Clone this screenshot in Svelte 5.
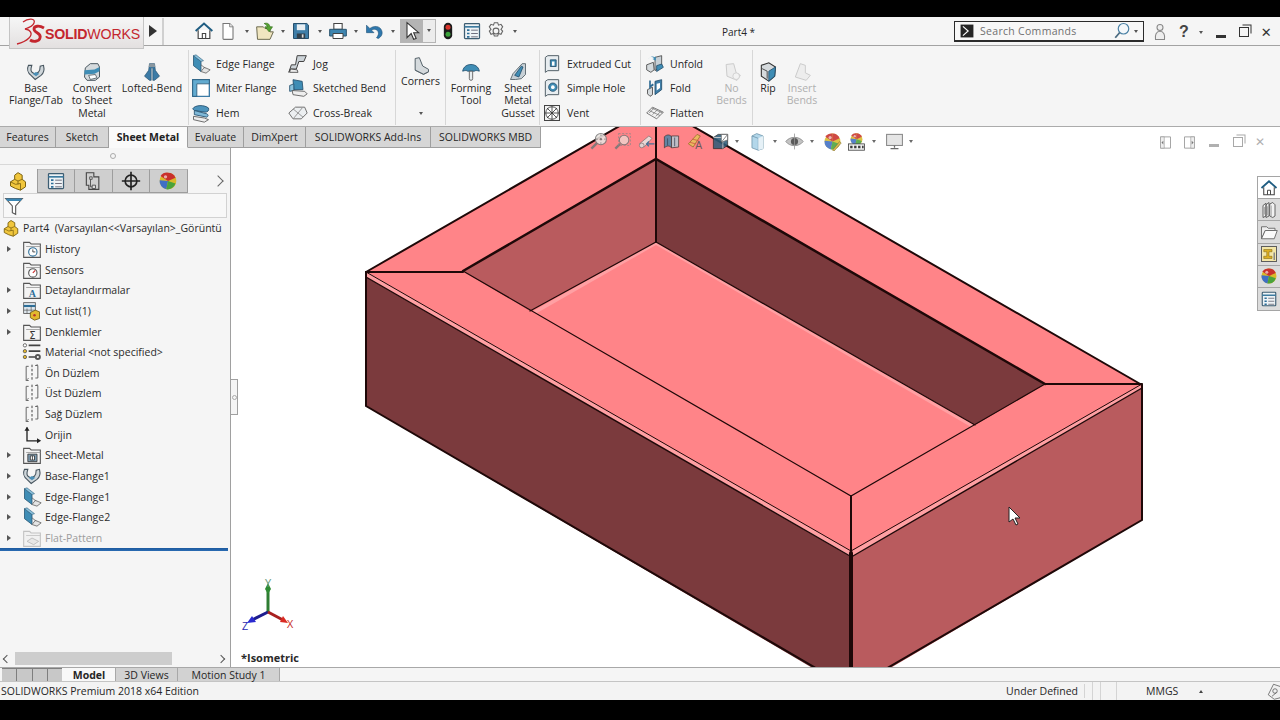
<script>
	const folder = (inner, fill = '#f4f4f4') =>
		`<path d="M2 4h7l2 2h11v16H2z" fill="${fill}" stroke="#555" stroke-width="1.3"/><path d="M5 9h17" stroke="#999" stroke-width="1"/>${inner}`;

	const edge = `<path d="M3 2 12 9v12L3 14z" fill="#3f8db5" stroke="#2b5a78"/><path d="M3 2 6 1l9 7-3 1z" fill="#8cc3dd" stroke="#2b5a78" stroke-width=".7"/><path d="M12 21l4-5 7 3-5 4z" fill="#e4e4e4" stroke="#666"/><path d="M12 13l5 4" stroke="#666"/>`;
	const base = `<path d="M3 4c-2 4-1 9 3 12l5 5 7-5c4-3 4-8 3-12l-4 1c0 3 0 5-2 7l-4 3-4-3C5 10 6 7 7 4z" fill="#cfd6da" stroke="#46545e" stroke-width="1.3"/><path d="M8 14l4 3 4-3-4-2z" fill="#4c8fb5"/>`;
	const plane = `<path d="M8 4H5v17h3M16 3h3v15h-3" fill="none" stroke="#666" stroke-width="1.2"/><path d="M12 2v20" stroke="#444" stroke-dasharray="3 2" stroke-width="1.2"/><path d="M5 21l3-3M16 3l3-1" stroke="#666"/>`;
	const globe = `<circle cx="12" cy="12" r="10" fill="#d9b92a"/><path d="M12 12 3 6a10 10 0 0 1 9-4z" fill="#c9302c"/><path d="M12 12V2a10 10 0 0 1 9 6z" fill="#c9302c"/><path d="M12 12 2 11a10 10 0 0 0 8 11z" fill="#3f6fc4"/><path d="M12 12l-2 10a10 10 0 0 0 11-7z" fill="#49a33c"/><circle cx="9" cy="7" r="2" fill="#fff" opacity=".6"/>`;
	const list = `<rect x="3" y="3" width="18" height="18" rx="1" fill="#eef3f6" stroke="#3d5d72" stroke-width="1.5"/><path d="M3 7h18" stroke="#3d7ba0" stroke-width="2"/><path d="M6 11h3M6 15h3M6 19h3" stroke="#2d6f99" stroke-width="2"/><path d="M11 11h8M11 15h8M11 19h8" stroke="#556"/>`;
	const part = `<path d="M3 13l5-3V5l4-3 5 3v5l4 3v6l-6 4-6-2-6-3z" fill="#f1c63c" stroke="#7c6210" stroke-width="1.2"/><path d="M8 10l4 2 5-2M12 12v4M3 13l6 3 6-1v8" fill="none" stroke="#7c6210" stroke-width="1"/>`;

	const icons = {
		home: `<path d="M2 12 12 3l10 9" fill="none" stroke="#1f5d82" stroke-width="2.4"/><path d="M5 11v10h14V11" fill="#fff" stroke="#444" stroke-width="1.4"/><path d="M10 21v-6h4v6" fill="none" stroke="#444" stroke-width="1.3"/>`,
		doc: `<path d="M6 3h8l4 4v14a1 1 0 0 1-1 1H7a1 1 0 0 1-1-1z" fill="#fff" stroke="#777" stroke-width="1.3"/><path d="M14 3v4h4" fill="#eee" stroke="#777"/>`,
		open: `<path d="M2 7h8l2 2h6v4h4l-4 9H3z" fill="#f0e6c0" stroke="#6d6a50" stroke-width="1.2"/><path d="M11 3c4-1 6 0 7 4h3l-4 6-5-6h3c-1-2-2-3-4-4z" fill="#56a332" stroke="#2f6d16" stroke-width=".8"/>`,
		save: `<path d="M3 3h16l2 2v16H3z" fill="#3f7ea8" stroke="#264f6c" stroke-width="1.2"/><path d="M7 4h10v7H7z" fill="#e8eef2"/><path d="M7 15h10v6H7z" fill="#33404a"/><path d="M13 16h2v4h-2z" fill="#ddd"/>`,
		print: `<path d="M7 3h10v7H7z" fill="#fff" stroke="#444" stroke-width="1.3"/><path d="M2 10h20v8H2z" fill="#3f86b0" stroke="#2b556f" stroke-width="1.2"/><path d="M6 15h12v6H6z" fill="#fff" stroke="#444" stroke-width="1.2"/>`,
		undo: `<path d="M3 5v9h9l-3-3c3-2 7-1 8 2 1 2 0 5-2 7l2 1c4-2 6-6 4-10-2-5-9-6-14-2z" fill="#2f78ad" stroke="#1c4f75" stroke-width=".7"/>`,
		arrow: `<path d="M6 2v18l5-5 3 7 3-1-3-7h6z" fill="#fff" stroke="#333" stroke-width="1.3"/>`,
		traffic: `<rect x="7" y="2" width="10" height="20" rx="5" fill="#1b1b1b"/><circle cx="12" cy="7.5" r="3" fill="#d9342b"/><circle cx="12" cy="16" r="3" fill="#3aa23a"/>`,
		list,
		gear: `<circle cx="12" cy="12" r="3.5" fill="none" stroke="#666" stroke-width="1.3"/><path d="M10 2h4l1 3 3-1 2 3-2 3 2 2-2 4-3-1-1 3h-4l-1-3-3 1-2-4 2-2-2-3 2-3 3 1z" fill="none" stroke="#666" stroke-width="1.3"/>`,
		user: `<circle cx="12" cy="6" r="4" fill="#eee" stroke="#888" stroke-width="1.4"/><path d="M6 22c-1-6 1-11 6-11s7 5 6 11z" fill="#eee" stroke="#888" stroke-width="1.4"/>`,
		lens: `<circle cx="14" cy="9" r="7" fill="#f4f8fb" stroke="#4b82a6" stroke-width="1.6"/><path d="M9 14l-6 7" stroke="#4b6b80" stroke-width="2.4"/>`,
		prompt: `<rect x="1" y="1" width="22" height="22" fill="#262626"/><path d="M5 4l9 8-9 8" fill="none" stroke="#fff" stroke-width="2"/>`,
		base,
		convert: `<path d="M4 7l6-5h9l2 4v12l-5 4H6l-3-4z" fill="#d5dadd" stroke="#4c5a62" stroke-width="1.2"/><path d="M3 10l12-1 6-3v5l-6 3-12 1z" fill="#3f8db5"/><path d="M8 16l8-1 2 4-8 2z" fill="#fff" stroke="#4c5a62"/>`,
		lofted: `<path d="M9 2h6l1 8 5 7-6 5h-2V7h-2v15H9l-6-5 5-7z" fill="#3c7ba6" stroke="#234e6c" stroke-width=".8"/><path d="M9 2h6l1 4H8z" fill="#8a97a0"/>`,
		edge,
		miter: `<path d="M2 2h20v20H2z" fill="#fff" stroke="#3c7ba6" stroke-width="1.6"/><path d="M2 2h20v5H7v15H2z" fill="#62abd0" stroke="#2b5a78"/>`,
		hem: `<path d="M2 7c3-5 14-5 19-1 1 3-1 5-4 5L4 9z" fill="#4c93bc" stroke="#234e6c"/><path d="M4 9l15 4c2 1 2 3 0 4L4 14z" fill="#80b9d8" stroke="#234e6c"/><path d="M3 16l13 2 5 2-5 3-13-3z" fill="#eee" stroke="#555"/>`,
		jog: `<path d="M11 2h11l-3 7h-6l-3 9H3l-2 4 3-9h5z" fill="#ccd3d8" stroke="#444" stroke-width="1.2"/><path d="M3 18l8 1 1 3H2z" fill="#eee" stroke="#444"/>`,
		sketched: `<path d="M6 2l11 2 1 10H7z" fill="#3f8db5" stroke="#234e6c"/><path d="M2 9l5-2v8l-5 1z" fill="#8cc3dd" stroke="#234e6c"/><path d="M5 15l15 1 3 3-4 3-13-2z" fill="#eee" stroke="#555"/>`,
		cross: `<path d="M1 12 9 5h11l3 7-7 7H6z" fill="#eceff1" stroke="#666" stroke-width="1.1"/><path d="M6 7l12 10M17 6 7 18" stroke="#888"/>`,
		corners: `<path d="M5 3l5-1 4 10 7 4v3l-6 3-10-5z" fill="#d5dadd" stroke="#55626a" stroke-width="1.2"/><path d="M5 17l10 5 6-3" fill="none" stroke="#55626a"/>`,
		forming: `<path d="M2 11C3 5 8 3 12 3s9 2 10 8c-3-1-5-1-6 0h-8c-1-1-3-1-6 0z" fill="#3f8db5" stroke="#234e6c"/><path d="M10 11h4v9a2 2 0 0 1-4 0z" fill="#e6ecef" stroke="#555"/>`,
		gusset: `<path d="M3 21l3-7L17 2h4v13l-5 5-7 1z" fill="#c7d0d6" stroke="#4c5a62"/><path d="M8 16l8-11 2 1-5 12z" fill="#3f8db5" stroke="#234e6c"/>`,
		extcut: `<path d="M4 4l3-2h13v18H7l-3 2z" fill="#e8edf0" stroke="#55626a" stroke-width="1.2"/><path d="M10 7h7v8h-7z" fill="#3f8db5" stroke="#234e6c"/><path d="M12 9h3v5h-3z" fill="#fff"/>`,
		hole: `<path d="M4 4l3-2h13v18H7l-3 2z" fill="#e8edf0" stroke="#55626a" stroke-width="1.2"/><circle cx="13" cy="11" r="5" fill="#3f8db5" stroke="#234e6c"/><circle cx="13" cy="11" r="2.2" fill="#fff"/>`,
		vent: `<rect x="3" y="3" width="18" height="18" fill="#f2f2f2" stroke="#444" stroke-width="1.2"/><circle cx="12" cy="12" r="7.5" fill="#fff" stroke="#333"/><path d="M12 4v16M4 12h16M6 6l12 12M18 6 6 18" stroke="#333"/>`,
		unfold: `<path d="M2 13l8-3 1 9-4 3-5-3z" fill="#d5dadd" stroke="#444"/><path d="M12 4l8-2v12l-8 6z" fill="#c7d0d6" stroke="#444"/><path d="M4 6c2-3 5-3 7-1l-2 1 4 2V3l-1 1c-3-2-6-1-8 2z" fill="#3f8db5"/><path d="M14 14l6-2 2 4-8 5z" fill="#3f8db5" stroke="#234e6c"/>`,
		fold: `<path d="M3 14l6-3v9l-3 2-3-3z" fill="#d5dadd" stroke="#444"/><path d="M12 4l8-2v12l-8 6z" fill="#3f7ea8" stroke="#234e6c"/><path d="M14 7l4-1v6l-4 3z" fill="#fff"/><path d="M6 3v8l3-3 1 1" fill="none" stroke="#2f6b93" stroke-width="2"/>`,
		flatten: `<path d="M2 12 9 5l13 6-8 8z" fill="#f2f2f2" stroke="#666"/><path d="M5 9l13 6M8 6l13 6M11 6l-6 6M15 8l-6 6M19 10l-6 6" stroke="#777" stroke-width=".9"/>`,
		nobends: `<g opacity=".55"><path d="M5 3l9-1 3 11 5 3-4 6-12-5z" fill="#e8e8e8" stroke="#aaa" stroke-width="1.2"/><circle cx="17" cy="17" r="4" fill="#f0f0f0" stroke="#aaa"/></g>`,
		rip: `<path d="M4 4l9-3 8 5-1 11-7 6-9-6z" fill="#d5dadd" stroke="#333" stroke-width="1.3"/><path d="M13 11l8-5-1 11-7 6z" fill="#3f8db5" stroke="#234e6c"/><path d="M5 8l6 3v9" fill="none" stroke="#333"/>`,
		insert: `<g opacity=".55"><path d="M10 2l6 2v9l6 3-5 6-13-4z" fill="#e8e8e8" stroke="#aaa" stroke-width="1.2"/></g>`,
		history: folder(`<circle cx="13" cy="15.5" r="5" fill="#fff" stroke="#2d6f99" stroke-width="1.3"/><path d="M13 12.5v3h3" stroke="#333" fill="none"/>`),
		sensors: folder(`<circle cx="13" cy="15.5" r="5" fill="#fff" stroke="#555" stroke-width="1.3"/><path d="M13 15.5l3-3" stroke="#c33" stroke-width="1.5"/>`),
		annot: folder(`<text x="12.5" y="20.5" font-family="Liberation Serif, serif" font-size="12" font-weight="700" text-anchor="middle" fill="#2d6f99">A</text>`),
		cutlist: `<rect x="2" y="2" width="14" height="13" fill="#dfe8ee" stroke="#555"/><path d="M2 6h14" stroke="#2d6f99" stroke-width="2.5"/><path d="M6 9v6M11 6v9M2 11h14" stroke="#555" stroke-width=".8"/><path d="M10 14l6-3 5 2v8l-6 2-5-3z" fill="#e2b92e" stroke="#6b5810"/><circle cx="15" cy="17" r="1.5" fill="#b6352a"/>`,
		sigma: folder(`<text x="12.5" y="20.5" font-family="DejaVu Sans, sans-serif" font-size="12" text-anchor="middle" fill="#333">Σ</text>`),
		material: `<circle cx="3.5" cy="4" r="2" fill="#fff" stroke="#555"/><circle cx="3.5" cy="11" r="2" fill="#e5b82a" stroke="#555"/><circle cx="3.5" cy="18" r="2" fill="#e5b82a" stroke="#555"/><path d="M8 4h14M8 11h14M8 18h8" stroke="#444" stroke-width="2"/><circle cx="19" cy="18" r="3.6" fill="#555"/><circle cx="19" cy="18" r="1.3" fill="#fff"/>`,
		plane,
		origin: `<path d="M6 3v16h14" fill="none" stroke="#222" stroke-width="1.6"/><path d="M3 7l3-5 3 5zM18 16l5 3-5 3z" fill="#222"/>`,
		smfolder: folder(`<path d="M7 11h11v9H7z" fill="#7f9fb5" stroke="#333"/><path d="M10 13h5v5h-5z" fill="#fff" stroke="#333"/><path d="M12.5 13v5" stroke="#333"/>`),
		flat: `<g opacity=".55">${folder(`<path d="M6 16l6-4 8 4-6 4z" fill="#ddd" stroke="#888"/>`, '#efefef').replaceAll('#555', '#999')}</g>`,
		part,
		treeview: list,
		config: `<path d="M4 2h9v5h6v15H7v-5H4z" fill="none" stroke="#444" stroke-width="1.3"/><path d="M8 7h3v3H8zM11 17h4v4h-4z" fill="#ddd" stroke="#444"/><path d="M9 10v9h2" fill="none" stroke="#444"/>`,
		crosshair: `<circle cx="12" cy="12" r="7" fill="none" stroke="#222" stroke-width="2"/><path d="M12 1v22M1 12h22" stroke="#222" stroke-width="2"/>`,
		globe,
		funnel: `<path d="M2 3h20l-8 9v10l-4-2v-8z" fill="#fff" stroke="#555" stroke-width="1.3"/><path d="M2 3h20l-2 3H4z" fill="#3a86b3"/>`,
		zoomfit: `<circle cx="15" cy="9" r="7" fill="#e9e4e0" stroke="#777" stroke-width="1.3"/><path d="M10 14l-7 7" stroke="#777" stroke-width="3"/><circle cx="15" cy="9" r="1.5" fill="#777"/><path d="M11 9h-2M21 9h-2M15 5V3M15 15v-2" stroke="#777"/>`,
		zoomarea: `<circle cx="14" cy="10" r="6" fill="#f2cfc9" stroke="#777" stroke-width="1.3"/><path d="M9 15l-6 6" stroke="#777" stroke-width="3"/><rect x="7" y="2" width="15" height="15" fill="none" stroke="#888" stroke-dasharray="2.5 2"/>`,
		prev: `<path d="M3 15 15 5l4 3-10 11z" fill="#e8e4e0" stroke="#777"/><circle cx="6" cy="17" r="3" fill="#ddd" stroke="#777"/><path d="M22 15H12m3-3-3 3 3 3" stroke="#2d6f99" stroke-width="1.6" fill="none"/>`,
		section: `<path d="M3 6c3-3 7-3 9 0v14c-2-3-6-3-9 0z" fill="#4e86a6" stroke="#333"/><path d="M12 5h9v14l-9 1z" fill="#b7c6cf" stroke="#333"/><path d="M7 8v9M16 7v11" stroke="#23435a"/>`,
		dyn: `<path d="M3 15 14 3l4 2-9 14z" fill="#e8c05a" stroke="#8a6d1f"/><path d="M8 9l8 2M5 13l7 2" stroke="#c9503c"/><text x="16" y="22" font-family="Liberation Sans, sans-serif" font-size="13" text-anchor="middle" fill="#555">A</text>`,
		orient: `<path d="M3 7l6-4h12v14l-6 4H3z" fill="#2f5d7a" stroke="#222"/><path d="M3 7h12v14" fill="none" stroke="#ddd"/><path d="M15 7l6-4" stroke="#ddd"/><path d="M13 3h8v7l-8 3z" fill="#fff" stroke="#555"/><path d="M13 13l8-10" stroke="#555"/>`,
		cube: `<path d="M5 5l6-3 8 3v16l-6 2-8-3z" fill="#a9d2e8" stroke="#5a87a0"/><path d="M5 5l8 3v15" fill="none" stroke="#5a87a0"/><path d="M13 8l6-3v16l-6 2z" fill="#e3f0f7"/>`,
		eye: `<path d="M1 12c5-7 17-7 22 0-5 7-17 7-22 0z" fill="#bbb" stroke="#777"/><circle cx="12" cy="12" r="4.5" fill="#444"/><path d="M12 2v20" stroke="#888"/>`,
		appear: `${globe}<path d="M12 23l9-11 2 2-9 10z" fill="#d8b43a" stroke="#6b5810" stroke-width=".7"/>`,
		scene: `<g transform="translate(3 0) scale(.75)">${globe}</g><rect x="2" y="15" width="20" height="8" fill="#eee" stroke="#222"/><path d="M4 19h3M9 19h3M14 19h3M19 19h2" stroke="#222" stroke-width="3"/>`,
		monitor: `<rect x="2" y="3" width="20" height="14" fill="#e2e2e2" stroke="#777" stroke-width="1.3"/><path d="M12 17v3M7 21h10" stroke="#555" stroke-width="1.6"/>`,
		pane1: `<path d="M4 3h16v18H4z" fill="#fff" stroke="#999" stroke-width="1.4"/><path d="M4 3h6v18H4z" fill="#eee" stroke="#999"/><path d="M8.5 9l-3 3 3 3z" fill="#777"/>`,
		pane2: `<path d="M4 3h16v18H4z" fill="#fff" stroke="#999" stroke-width="1.4"/><path d="M14 3h6v18h-6z" fill="#eee" stroke="#999"/><path d="M15.5 9l3 3-3 3z" fill="#777"/>`,
		books: `<path d="M4 6l4-3v17l-4 2zM8 5l4-3v18l-4 2zM13 4l4-2 3 3v15l-3 2-4-2z" fill="#f2f2f2" stroke="#555" stroke-width="1.2"/><path d="M15 6v14M6 8v10M10 7v12" stroke="#999"/>`,
		openfolder: `<path d="M2 21V5h7l2 2h9v3H7z" fill="#eee" stroke="#666" stroke-width="1.2"/><path d="M2 21l5-11h16l-4 11z" fill="#fafafa" stroke="#666" stroke-width="1.2"/>`,
		library: `<rect x="2" y="2" width="20" height="20" fill="#f3e6a8" stroke="#5a5a5a" stroke-width="1.3"/><path d="M5 6h11v3H12v6h4v3H5v-3h4V9H5z" fill="#dcaf22" stroke="#7c6210" stroke-width=".7"/><path d="M18 10h2v10h-2z" fill="#888"/>`,
		sheet: `<path d="M3 17 10 3l9 3 3 5-3 10-8 2z" fill="#f0f0f0" stroke="#555"/><circle cx="12" cy="12" r="3" fill="none" stroke="#555"/><path d="M8 19l6-5" stroke="#555"/>`
	};

	// [icon, label, disabled, width]
	const groups = [
		{ w: 189, pad: 3, large: [['base', 'Base<br>Flange/Tab', false, 66], ['convert', 'Convert<br>to Sheet<br>Metal', false, 46], ['lofted', 'Lofted-Bend', false, 74]] },
		{ w: 207, cols: [
			{ w: 97, items: [['edge', 'Edge Flange'], ['miter', 'Miter Flange'], ['hem', 'Hem']] },
			{ w: 110, items: [['jog', 'Jog'], ['sketched', 'Sketched Bend'], ['cross', 'Cross-Break']] }
		] },
		{ w: 50, corners: true },
		{ w: 94, large: [['forming', 'Forming<br>Tool', false, 50], ['gusset', 'Sheet<br>Metal<br>Gusset', false, 44]] },
		{ w: 101, cols: [{ w: 100, items: [['extcut', 'Extruded Cut'], ['hole', 'Simple Hole'], ['vent', 'Vent']] }] },
		{ w: 112, pad: 2, cols: [{ w: 68, items: [['unfold', 'Unfold'], ['fold', 'Fold'], ['flatten', 'Flatten']] }], large: [['nobends', 'No<br>Bends', true, 41]] },
		{ w: 80, last: true, large: [['rip', 'Rip', false, 30], ['insert', 'Insert<br>Bends', true, 38]] }
	];

	const tabs = [
		['Features', 56], ['Sketch', 53], ['Sheet Metal', 79, true], ['Evaluate', 56],
		['DimXpert', 62], ['SOLIDWORKS Add-Ins', 125], ['SOLIDWORKS MBD', 110]
	];

	const tree = [
		['history', 'History', true], ['sensors', 'Sensors', false], ['annot', 'Detaylandırmalar', true],
		['cutlist', 'Cut list(1)', true], ['sigma', 'Denklemler', true], ['material', 'Material <not specified>', false],
		['plane', 'Ön Düzlem', false], ['plane', 'Üst Düzlem', false], ['plane', 'Sağ Düzlem', false],
		['origin', 'Orijin', false], ['smfolder', 'Sheet-Metal', true], ['base', 'Base-Flange1', true],
		['edge', 'Edge-Flange1', true], ['edge', 'Edge-Flange2', true], ['flat', 'Flat-Pattern', true, true]
	];

	const hud = [
		[['zoomfit', false], ['zoomarea', false], ['prev', false], ['section', false], ['dyn', false], ['orient', true]],
		[['cube', true]],
		[['eye', true]],
		[['appear', false], ['scene', true]],
		[['monitor', true]]
	];
</script>

{#snippet ic(name, cls = '')}
	<svg class="ic {cls}" viewBox="0 0 24 24" aria-hidden="true">{@html icons[name]}</svg>
{/snippet}

{#snippet big(item)}
	<div class="big" class:off={item[2]} style="width: {item[3]}px">{@render ic(item[0])}<span>{@html item[1]}</span></div>
{/snippet}

<div class="app">
	<div class="letterbox top"></div>

	<header class="titlebar">
		<div class="logo">
			<svg class="ds" viewBox="0 0 30 28" aria-hidden="true">
				<path d="M8 5C13 1 21 1 19 6 18 9 13 11 10 12 16 13 18 17 14 21 11 24 6 26 2 27" fill="none" stroke="#c4262e" stroke-width="1.3" />
				<path d="M29 11C24 8 19 9 19 12 19 16 27 16 25 21 24 25 18 25 15 23" fill="none" stroke="#c4262e" stroke-width="2.8" />
			</svg>
			<span class="brand"><b>SOLID</b>WORKS</span>
		</div>
		<div class="expand"></div>
		<div class="quick">
			<span class="qa">{@render ic('home')}</span>
			{#each ['doc', 'open', 'save', 'print', 'undo'] as name}
				<span class="qa">{@render ic(name)}</span><span class="dd"></span>
			{/each}
			<span class="select"><span class="pressed">{@render ic('arrow')}</span><span class="dd"></span></span>
			<span class="qa">{@render ic('traffic')}</span>
			<span class="qa">{@render ic('list')}</span>
			<span class="qa">{@render ic('gear')}</span><span class="dd"></span>
		</div>
		<div class="doc-title">Part4 *</div>
		<div class="search">
			{@render ic('prompt', 'sm')}
			<span class="search-text">Search Commands</span>
			{@render ic('lens', 'md')}
			<span class="dd"></span>
		</div>
		<div class="winbtns">
			{@render ic('user', 'md')}
			<span class="help">?</span><span class="dd"></span>
			<span class="min"></span>
			<span class="restore"></span>
			<span class="close">✕</span>
		</div>
	</header>

	<section class="ribbon">
		{#each groups as g}
			<div class="group" class:last={g.last} style="width: {g.w}px; padding-left: {g.pad ?? 0}px">
				{#if g.corners}
					<div class="corners">
						{@render ic('corners')}
						<span>Corners</span>
						<span class="dd corners-dd"></span>
					</div>
				{/if}
				{#each g.cols ?? [] as col}
					<div class="col" style="width: {col.w}px">
						{#each col.items as [icon, label]}
							<div class="small">{@render ic(icon)}<span>{label}</span></div>
						{/each}
					</div>
				{/each}
				{#each g.large ?? [] as item}
					{@render big(item)}
				{/each}
			</div>
		{/each}
	</section>

	<main class="main">
		<nav class="cmd-tabs">
			{#each tabs as [label, w, active]}
				<span class="cmd-tab" class:active style="width: {w}px">{label}</span>
			{/each}
		</nav>

		<aside class="panel">
			<div class="grip"><i></i></div>
			<div class="panel-tabs">
				<span class="ptab active">{@render ic('part', 'pt')}</span>
				<span class="ptab">{@render ic('treeview', 'pt')}</span>
				<span class="ptab">{@render ic('config', 'pt')}</span>
				<span class="ptab">{@render ic('crosshair', 'pt')}</span>
				<span class="ptab">{@render ic('globe', 'pt')}</span>
				<span class="chev"></span>
			</div>
			<div class="filter">{@render ic('funnel', 'fn')}</div>
			<div class="tree">
				<div class="node root">{@render ic('part', 'row')}<span>Part4&nbsp; (Varsayılan&lt;&lt;Varsayılan&gt;_Görüntü</span></div>
				{#each tree as [icon, label, arrow, off]}
					<div class="node" class:off>
						<span class="twist" class:arrow></span>
						{@render ic(icon)}
						<span>{label}</span>
					</div>
				{/each}
			</div>
			<div class="rollback"></div>
			<div class="hscroll">
				<span class="sb-arrow left"></span>
				<span class="thumb"></span>
				<span class="sb-arrow right"></span>
			</div>
		</aside>

		<div class="viewport">
			<svg class="model" viewBox="231 127 1049 540" aria-label="Sheet metal part">
				<!-- top rim -->
				<polygon points="366,272 656,105 1142,385 852,553" fill="#ff8488" />
				<!-- cavity -->
				<polygon points="463,271 656,159 656,242 530,311" fill="#b95b5e" />
				<polygon points="656,159 1045,384 975,425 656,242" fill="#7b3a3d" />
				<polygon points="530,311 656,242 975,425 851,496" fill="#ff8488" />
				<!-- outer walls -->
				<polygon points="366,277 850,556 850,690 366,406" fill="#7b3a3d" />
				<polygon points="853,556 1142,388 1142,520 853,690" fill="#b95b5e" />
				<!-- lips -->
				<polygon points="366,272 851,551 851,556 366,277" fill="#ffa0a3" />
				<polygon points="852,551 1142,384 1142,388 853,556" fill="#ffa0a3" />
				<polygon points="533,311 656,242 656,245 537,313" fill="#ffa0a3" />
				<polygon points="656,242 975,425 971,427 656,245" fill="#ffa0a3" />
				<g fill="none" stroke="#1e0808" stroke-linecap="round">
					<path d="M366 272 656 105 1142 385" stroke-width="2" />
					<path d="M366 272V406L850 688M1142 385V520L853 688" stroke-width="2" />
					<path d="M366 272H463M1045 384H1142M656 105V242" stroke-width="2" />
					<path d="M463 271 656 159 1045 384" stroke-width="2.5" />
					<path d="M366 272 851 551 1142 384" stroke-width="1" />
					<path d="M366 277 850 556M853 556 1142 388" stroke-width="1.4" />
					<path d="M463 271 851 496 1045 384M530 311 656 242 975 425" stroke-width="1.2" />
					<path d="M851 496V551" stroke-width="2" />
					<path d="M851 553V667" stroke-width="4" />
				</g>
			</svg>

			<div class="hud">
				{#each hud as set}
					<div class="hud-set">
						{#each set as [name, hasDd]}
							<span class="hud-btn">{@render ic(name, 'hud-ic')}</span>
							{#if hasDd}<span class="dd hud-dd"></span>{/if}
						{/each}
					</div>
				{/each}
			</div>

			<div class="pane-btns">
				<span>{@render ic('pane1', 'pb')}</span>
				<span>{@render ic('pane2', 'pb')}</span>
				<span class="min grey"></span>
				<span class="restore grey"></span>
				<span class="close grey">✕</span>
			</div>

			<div class="taskpane">
				<span class="active">{@render ic('home', 'tp')}</span>
				<span>{@render ic('books', 'tp')}</span>
				<span>{@render ic('openfolder', 'tp')}</span>
				<span>{@render ic('library', 'tp')}</span>
				<span>{@render ic('globe', 'tp')}</span>
				<span>{@render ic('treeview', 'tp')}</span>
			</div>

			<svg class="triad" viewBox="0 0 60 55" aria-hidden="true">
				<path d="M28 33V12" stroke="#2e7d32" stroke-width="3" />
				<path d="M28 4l3 6-3 5-3-5z" fill="#2e8b32" />
				<path d="M28 33 12 41" stroke="#1d1d8f" stroke-width="3" />
				<path d="M7 44l5-7 4 6z" fill="#2a2ad0" />
				<path d="M28 33l15 8" stroke="#a8201f" stroke-width="3" />
				<path d="M48 44l-8-1 3-6z" fill="#d92a22" />
				<text x="28" y="8" class="axis y">Y</text>
				<text x="5" y="51" class="axis z">Z</text>
				<text x="50" y="49" class="axis x">X</text>
			</svg>

			<div class="view-name">*Isometric</div>

			<svg class="cursor" viewBox="0 0 12 20" aria-hidden="true">
				<path d="M1 1v15l4-3 3 6 2-1-3-6h5z" fill="#fff" stroke="#222" stroke-width="1" />
			</svg>

			<div class="handle"><i></i></div>
		</div>
	</main>

	<div class="model-tabs">
		<div class="nav-btns">
			<span></span><span></span><span></span><span></span>
		</div>
		<span class="mtab active">Model</span>
		<span class="mtab w3d">3D Views</span>
		<span class="mtab wms">Motion Study 1</span>
	</div>

	<footer class="status">
		<span class="edition">SOLIDWORKS Premium 2018 x64 Edition</span>
		<span class="st-def">Under Defined</span>
		<span class="st-a"></span>
		<span class="st-b"></span>
		<span class="st-c"></span>
		<span class="st-units">MMGS</span>
		<span class="st-up"></span>
		{@render ic('sheet', 'st-ic')}
	</footer>

	<div class="letterbox bottom"></div>
</div>

<style>
	:global(body) {
		margin: 0;
		background: #000;
	}

	.app {
		width: 1280px;
		height: 720px;
		display: flex;
		flex-direction: column;
		overflow: hidden;
		font-family: 'Open Sans', 'Noto Sans', sans-serif;
		font-size: 10.5px;
		color: #262626;
	}

	.letterbox {
		background: #000;
		flex: none;
	}
	.letterbox.top {
		height: 17px;
	}
	.letterbox.bottom {
		height: 20px;
	}

	.ic {
		width: 20px;
		height: 20px;
		flex: none;
		display: block;
	}
	.ic.sm {
		width: 14px;
		height: 14px;
	}
	.ic.md {
		width: 18px;
		height: 18px;
	}
	.ic.row {
		width: 18px;
		height: 18px;
	}

	.dd {
		width: 13px;
		height: 20px;
		flex: none;
		display: flex;
		align-items: center;
		justify-content: center;
	}
	.dd::after {
		content: '';
		border-left: 2.5px solid transparent;
		border-right: 2.5px solid transparent;
		border-top: 3px solid #555;
	}

	/* title bar */
	.titlebar {
		height: 28px;
		flex: none;
		background: #f5f5f5;
		border-bottom: 1px solid #a3a3a3;
		display: flex;
		align-items: center;
		position: relative;
		z-index: 3;
	}
	.logo {
		position: absolute;
		left: 9px;
		top: 0;
		width: 135px;
		height: 32px;
		box-sizing: border-box;
		background: linear-gradient(#f6f6f6, #e3e0e0);
		border: 1px solid #c4c4c4;
		border-top: 0;
		display: flex;
		align-items: center;
		padding-left: 5px;
		color: #c4262e;
	}
	.ds {
		width: 30px;
		height: 28px;
		margin-top: -3px;
		flex: none;
	}
	.brand {
		font-family: 'Liberation Sans', sans-serif;
		font-size: 14.2px;
		letter-spacing: -0.2px;
		margin-top: 3px;
	}
	.brand b {
		font-weight: 700;
	}
	.expand {
		width: 20px;
		height: 27px;
		margin-left: 144px;
		flex: none;
		box-sizing: border-box;
		border-right: 2px solid #d0d0d0;
		display: flex;
		align-items: center;
		justify-content: center;
	}
	.expand::after {
		content: '';
		border-top: 6px solid transparent;
		border-bottom: 6px solid transparent;
		border-left: 8px solid #333;
	}
	.quick {
		display: flex;
		align-items: center;
		margin-left: 28px;
	}
	.qa {
		width: 24px;
		height: 24px;
		display: flex;
		align-items: center;
		justify-content: center;
		flex: none;
	}
	.quick .dd {
		margin-right: -0.5px;
	}
	.select {
		display: flex;
		width: 36px;
		height: 24px;
		margin-left: 1.5px;
		background: #ececec;
		box-sizing: border-box;
		border: 1px solid #b5b5b5;
	}
	.pressed {
		width: 22px;
		background: #b4b4b4;
		display: flex;
		align-items: center;
		justify-content: center;
	}
	.doc-title {
		position: absolute;
		left: 722px;
		top: 8px;
		font-size: 10px;
	}
	.search {
		position: absolute;
		left: 954px;
		top: 4px;
		width: 190px;
		height: 21px;
		box-sizing: border-box;
		border: 1px solid #2b2b2b;
		border-bottom-width: 2px;
		background: #f7f7f7;
		display: flex;
		align-items: center;
		padding-left: 5px;
	}
	.search-text {
		margin-left: 6px;
		width: 133px;
		color: #707070;
		letter-spacing: 0.3px;
	}
	.search .dd {
		width: 11px;
		margin-left: -1px;
	}
	.winbtns {
		position: absolute;
		left: 1151px;
		top: 4px;
		height: 22px;
		display: flex;
		align-items: center;
	}
	.help {
		font-family: 'Liberation Sans', sans-serif;
		font-size: 16px;
		font-weight: 700;
		color: #444;
		margin-left: 10px;
	}
	.winbtns .dd {
		margin-left: 6px;
	}
	.min {
		width: 10px;
		height: 3px;
		background: #333;
		margin: 9px 0 0 8px;
		flex: none;
	}
	.restore {
		width: 8px;
		height: 8px;
		border: 1.3px solid #333;
		margin-left: 13px;
		box-shadow: 2px -2px 0 -0.5px #f5f5f5, 3px -3px 0 -0.5px #333;
		flex: none;
	}
	.close {
		margin-left: 12px;
		font-family: 'DejaVu Sans', sans-serif;
		font-size: 13px;
		color: #333;
	}

	/* ribbon */
	.ribbon {
		height: 81px;
		flex: none;
		background: #f5f5f5;
		border-bottom: 1px solid #ababab;
		display: flex;
		padding-top: 4px;
		box-sizing: border-box;
	}
	.group {
		flex: none;
		height: 75px;
		box-sizing: border-box;
		border-right: 1px solid #d7d7d7;
		display: flex;
		justify-content: flex-start;
	}
	.group.last {
		border-right: 0;
	}
	.big {
		display: flex;
		flex-direction: column;
		align-items: center;
		flex: none;
		text-align: center;
		line-height: 12.4px;
		padding-top: 12px;
		white-space: nowrap;
	}
	.big.off {
		color: #b0b0b0;
	}
	.col {
		display: flex;
		flex-direction: column;
		flex: none;
		padding-top: 2px;
	}
	.small {
		display: flex;
		align-items: center;
		height: 24.5px;
		gap: 5px;
		padding-left: 2px;
		white-space: nowrap;
	}
	.corners {
		display: flex;
		flex-direction: column;
		align-items: center;
		width: 50px;
		padding-top: 6px;
		line-height: 12px;
	}
	.corners span:nth-of-type(1) {
		margin-top: -1px;
	}
	.corners-dd {
		margin-top: 16px;
	}

	/* main */
	.main {
		flex: 1;
		display: flex;
		position: relative;
		min-height: 0;
	}
	.cmd-tabs {
		position: absolute;
		left: 0;
		top: 0;
		display: flex;
		height: 21px;
		z-index: 2;
	}
	.cmd-tab {
		box-sizing: border-box;
		background: #d6d6d6;
		border-right: 1px solid #9f9f9f;
		border-bottom: 1px solid #9f9f9f;
		display: flex;
		align-items: center;
		justify-content: center;
		white-space: nowrap;
	}
	.cmd-tab.active {
		background: #fafafa;
		border-bottom-color: #fafafa;
		font-weight: 700;
		color: #222;
	}
	.panel {
		width: 231px;
		flex: none;
		box-sizing: border-box;
		background: #f5f5f5;
		border-right: 1px solid #a0a0a0;
		padding-top: 21px;
		display: flex;
		flex-direction: column;
	}
	.grip {
		height: 16px;
		flex: none;
		border-bottom: 1px solid #d8d8d8;
		display: flex;
		align-items: center;
		justify-content: center;
	}
	.grip i {
		width: 4px;
		height: 4px;
		border: 1px solid #aaa;
		border-radius: 50%;
		margin-right: 4px;
	}
	.panel-tabs {
		display: flex;
		height: 24px;
		flex: none;
		margin-top: 4px;
		align-items: stretch;
	}
	.ptab {
		width: 37.5px;
		box-sizing: border-box;
		background: #cfcfcf;
		border-right: 1px solid #9d9d9d;
		border-bottom: 1px solid #9d9d9d;
		border-top: 1px solid #bcbcbc;
		display: flex;
		align-items: center;
		justify-content: center;
	}
	.ptab.active {
		background: #f5f5f5;
		border-top: 0;
		border-bottom: 0;
	}
	.chev {
		margin-left: 26px;
		width: 7px;
		height: 7px;
		border-top: 1.6px solid #666;
		border-right: 1.6px solid #666;
		transform: rotate(45deg);
		align-self: center;
	}
	.filter {
		height: 25px;
		flex: none;
		box-sizing: border-box;
		margin: 0 3px;
		background: #f8f8f8;
		border: 1px solid #d2d2d2;
		display: flex;
		align-items: center;
	}
	.tree {
		flex: none;
	}
	.node {
		height: 20.65px;
		display: flex;
		align-items: center;
		padding-left: 5px;
		white-space: nowrap;
		color: #2a2a2a;
	}
	.node.root {
		padding-left: 2px;
		gap: 3px;
	}
	.node.off {
		color: #9c9c9c;
	}
	.node > .ic {
		margin-right: 3px;
	}
	.node.root > .ic {
		margin-right: 0;
	}
	.twist {
		width: 17px;
		flex: none;
	}
	.twist.arrow::before {
		content: '';
		display: block;
		border-top: 3.5px solid transparent;
		border-bottom: 3.5px solid transparent;
		border-left: 4px solid #555;
		margin-left: 2px;
	}
	.rollback {
		height: 3px;
		flex: none;
		margin-right: 2px;
		background: linear-gradient(#1d5a9e, #2a6bb3);
	}
	.hscroll {
		margin-top: auto;
		height: 13px;
		margin-bottom: 2px;
		display: flex;
		align-items: center;
		flex: none;
		position: relative;
	}
	.thumb {
		position: absolute;
		left: 15px;
		width: 157px;
		top: 0;
		bottom: 0;
		background: #cdcdcd;
	}
	.sb-arrow {
		position: absolute;
		width: 5px;
		height: 5px;
		border-top: 1.5px solid #555;
		border-right: 1.5px solid #555;
	}
	.sb-arrow.left {
		left: 4px;
		transform: rotate(-135deg);
	}
	.sb-arrow.right {
		right: 6px;
		transform: rotate(45deg);
	}

	/* graphics area */
	.viewport {
		flex: 1;
		position: relative;
		background: #fff;
		overflow: hidden;
	}
	.model {
		position: absolute;
		left: 0;
		top: 0;
		width: 1049px;
		height: 540px;
	}
	.hud {
		position: absolute;
		left: 355px;
		top: 3px;
		height: 22px;
		display: flex;
		align-items: center;
		gap: 3px;
		opacity: 0.88;
	}
	.hud-set {
		display: flex;
		align-items: center;
	}
	.hud-btn {
		width: 24.4px;
		display: flex;
		justify-content: center;
	}
	.ic.hud-ic {
		width: 19px;
		height: 19px;
	}
	.hud-dd {
		width: 10px;
	}
	.pane-btns {
		position: absolute;
		left: 922px;
		top: 6px;
		display: flex;
		align-items: center;
		height: 18px;
	}
	.pane-btns > span:nth-child(-n + 2) {
		width: 24.5px;
		display: flex;
		justify-content: center;
	}
	.ic.pb {
		width: 15px;
		height: 15px;
	}
	.min.grey {
		background: #b0b0b0;
		margin: 7px 0 0 7px;
	}
	.restore.grey {
		border-color: #a8a8a8;
		box-shadow: 2px -2px 0 -0.5px #fff, 3px -3px 0 -0.5px #a8a8a8;
		margin-left: 14px;
	}
	.close.grey {
		color: #b0b0b0;
		font-size: 12px;
		margin-left: 12px;
	}
	.taskpane {
		position: absolute;
		right: 0;
		top: 49px;
		width: 23px;
		display: flex;
		flex-direction: column;
		border: 1px solid #a5a5a5;
		border-right: 0;
		box-sizing: border-box;
	}
	.taskpane span {
		height: 22.2px;
		background: #dcdcdc;
		border-bottom: 1px solid #a5a5a5;
		box-sizing: border-box;
		display: flex;
		align-items: center;
		justify-content: center;
	}
	.taskpane span.active {
		background: #fff;
	}
	.taskpane span:last-child {
		border-bottom: 0;
	}
	.ic.tp {
		width: 18px;
		height: 18px;
	}
	.triad {
		position: absolute;
		left: 9px;
		top: 452px;
		width: 60px;
		height: 55px;
	}
	.axis {
		font-family: 'Liberation Sans', sans-serif;
		font-size: 10px;
		text-anchor: middle;
	}
	.axis.y {
		fill: #6a9a7a;
	}
	.axis.z {
		fill: #2a2ab0;
	}
	.axis.x {
		fill: #c9302c;
	}
	.view-name {
		position: absolute;
		left: 10px;
		top: 523px;
		font-weight: 700;
		font-size: 11px;
		color: #2a2a2a;
	}
	.cursor {
		position: absolute;
		left: 777px;
		top: 379px;
		width: 12px;
		height: 20px;
	}
	.handle {
		position: absolute;
		left: 0;
		top: 252px;
		width: 7px;
		height: 36px;
		box-sizing: border-box;
		background: #f5f5f5;
		border: 1px solid #a0a0a0;
		border-left: 0;
		display: flex;
		align-items: center;
		justify-content: center;
	}
	.handle i {
		width: 3px;
		height: 3px;
		border: 1px solid #aaa;
		border-radius: 50%;
	}

	/* bottom tabs + status */
	.model-tabs {
		height: 15px;
		box-sizing: border-box;
		flex: none;
		background: #f5f5f5;
		border-top: 1px solid #a8a8a8;
		border-bottom: 1px solid #c4c4c4;
		display: flex;
	}
	.nav-btns {
		margin-left: 2px;
		width: 60px;
		display: flex;
		background: #7e7e7e;
		padding: 1px 0 0 0;
		box-sizing: border-box;
		gap: 1px;
	}
	.nav-btns span {
		flex: 1;
		background: #c8c8c8;
	}
	.mtab {
		display: flex;
		align-items: center;
		justify-content: center;
		box-sizing: border-box;
		background: #d2d2d2;
		border-right: 1px solid #a8a8a8;
		border-left: 1px solid #a8a8a8;
		margin-left: -1px;
	}
	.mtab.active {
		width: 54px;
		background: #f8f8f8;
		font-weight: 700;
		margin-left: 0;
		border: 0;
	}
	.mtab.w3d {
		width: 63px;
	}
	.mtab.wms {
		width: 103px;
	}
	.status {
		height: 18px;
		flex: none;
		background: #f3f3f3;
		display: flex;
		align-items: center;
		white-space: nowrap;
	}
	.edition {
		margin-left: 1px;
		width: 1005px;
		flex: none;
	}
	.st-def {
		width: 79px;
		flex: none;
		box-sizing: border-box;
		text-align: right;
		padding-right: 6px;
		border-right: 1px solid #d4d4d4;
	}
	.st-a,
	.st-b,
	.st-c {
		height: 18px;
		border-right: 1px solid #d4d4d4;
		flex: none;
	}
	.st-a,
	.st-b {
		width: 7px;
	}
	.st-c {
		width: 15px;
	}
	.st-units {
		margin-left: 29px;
		width: 53px;
		flex: none;
	}
	.st-up {
		border-left: 2.5px solid transparent;
		border-right: 2.5px solid transparent;
		border-bottom: 3px solid #444;
		flex: none;
	}
	.ic.st-ic {
		width: 18px;
		height: 18px;
		margin-left: 63px;
	}
</style>
